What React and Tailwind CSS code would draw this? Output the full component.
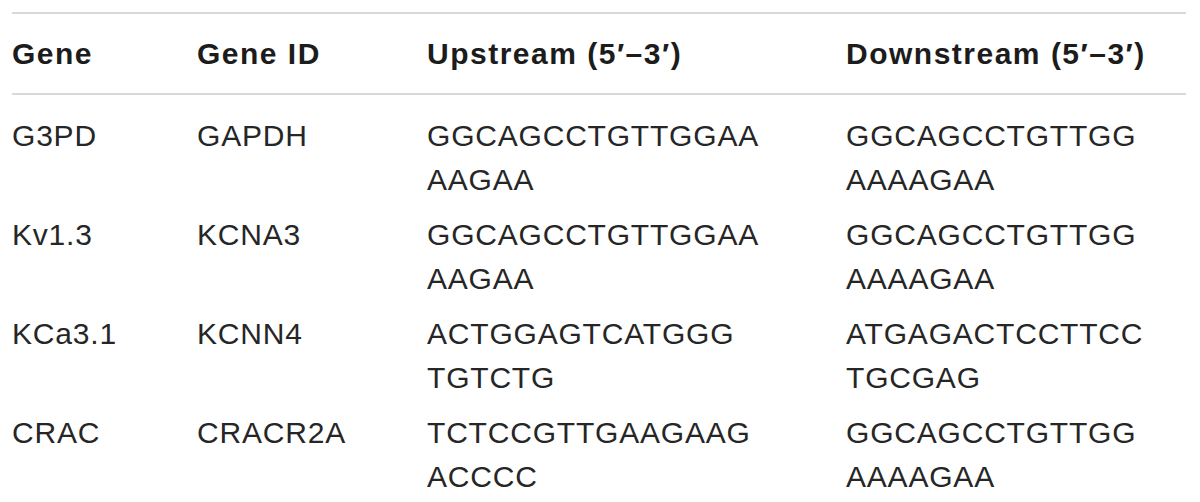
const rows = [
  { gene: 'G3PD', id: 'GAPDH', up: ['GGCAGCCTGTTGGAA', 'AAGAA'], down: ['GGCAGCCTGTTGG', 'AAAAGAA'] },
  { gene: 'Kv1.3', id: 'KCNA3', up: ['GGCAGCCTGTTGGAA', 'AAGAA'], down: ['GGCAGCCTGTTGG', 'AAAAGAA'] },
  { gene: 'KCa3.1', id: 'KCNN4', up: ['ACTGGAGTCATGGG', 'TGTCTG'], down: ['ATGAGACTCCTTCC', 'TGCGAG'] },
  { gene: 'CRAC', id: 'CRACR2A', up: ['TCTCCGTTGAAGAAG', 'ACCCC'], down: ['GGCAGCCTGTTGG', 'AAAAGAA'] },
];

const Seq = ({ lines }) => (
  <>
    {lines.map((l, i) => (
      <span key={i} className="block">{l}</span>
    ))}
  </>
);

export default function App() {
  return (
    <div className="w-[1200px] h-[502px] bg-white overflow-hidden [font-family:'Liberation_Sans',Arial,sans-serif]">
      <table className="ml-[12px] mt-[12px] w-[1174px] table-fixed border-collapse border-t-2 border-[#d9d9d9]">
        <colgroup>
          <col className="w-[185px]" />
          <col className="w-[230px]" />
          <col className="w-[419px]" />
          <col />
        </colgroup>
        <thead>
          <tr className="border-b-2 border-[#d9d9d9]">
            {['Gene', 'Gene ID', 'Upstream (5′–3′)', 'Downstream (5′–3′)'].map((h) => (
              <th
                key={h}
                className="p-0 pt-[18px] pb-[17px] text-left align-top text-[30px] leading-[44px] font-bold tracking-[1.5px] text-[#1c1c1c] whitespace-nowrap"
              >
                {h}
              </th>
            ))}
          </tr>
        </thead>
        <tbody className="text-[30px] leading-[44px] tracking-[0.8px] text-[#262626]">
          {rows.map((r, i) => {
            const pad = i === 0 ? 'pt-[19px] pb-[6px]' : 'pt-[5px] pb-[6px]';
            return (
              <tr key={r.gene}>
                <td className={`p-0 align-top ${pad}`}>{r.gene}</td>
                <td className={`p-0 align-top ${pad}`}>{r.id}</td>
                <td className={`p-0 align-top ${pad}`}><Seq lines={r.up} /></td>
                <td className={`p-0 align-top ${pad}`}><Seq lines={r.down} /></td>
              </tr>
            );
          })}
        </tbody>
      </table>
    </div>
  );
}
